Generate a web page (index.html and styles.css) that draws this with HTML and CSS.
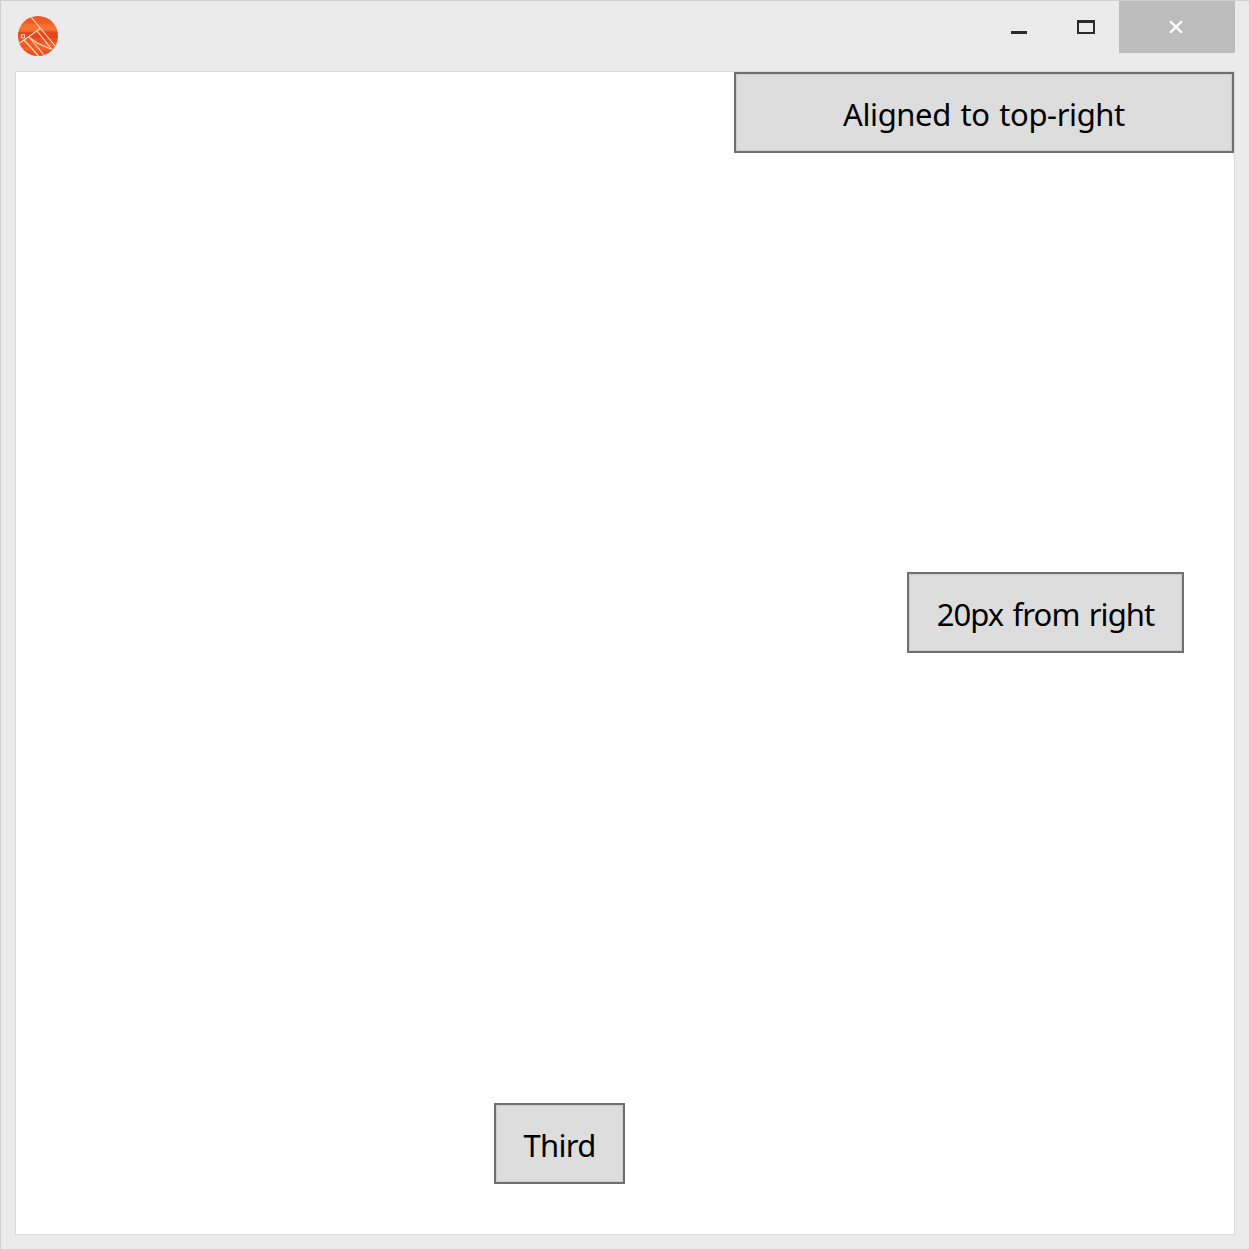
FILE: index.html
```html
<!DOCTYPE html>
<html lang="en">
<head>
<meta charset="utf-8">
<title>Window</title>
<link rel="stylesheet" href="styles.css">
</head>
<body>
<div class="window">
  <header class="titlebar">
    <svg class="logo" width="40" height="40" viewBox="0 0 40 40">
      <defs>
        <clipPath id="disc"><circle cx="20" cy="20" r="20"/></clipPath>
        <linearGradient id="grain" x1="0" y1="0" x2="0" y2="1">
          <stop offset="0" stop-color="#ed5320"/>
          <stop offset=".18" stop-color="#f15f2a"/>
          <stop offset=".28" stop-color="#f57536"/>
          <stop offset=".38" stop-color="#f2682d"/>
          <stop offset=".43" stop-color="#e34a1a"/>
          <stop offset=".52" stop-color="#e54a1a"/>
          <stop offset=".62" stop-color="#ef5c26"/>
          <stop offset=".8" stop-color="#f2622b"/>
          <stop offset="1" stop-color="#e24a1a"/>
        </linearGradient>
      </defs>
      <g clip-path="url(#disc)" fill="none">
        <rect width="40" height="40" fill="url(#grain)"/>
        <path d="M0 17h13l5-1h22M8 21h32M20 25h20M0 30h10l5 2" stroke="#d83a10" stroke-width=".9" opacity=".7"/>
        <path d="M6 9h26M2 13h35M18 29h20" stroke="#ff8540" stroke-width=".8" opacity=".6"/>
        <path d="M13 1 38 31M1 27.5 11 20.5 22 12.5M19 15 34 33.5M6 24 20.5 40M11 21 26 39M11 21 19 27 34 33.5" stroke="#ffd9c6" stroke-width="1.15"/>
        <path d="M3.3 18.8h3.2v3h-3.2z" stroke="#ffd9c6" stroke-width="1.1"/>
      </g>
    </svg>
    <div class="controls">
      <div class="control minimize"><svg width="16" height="3"><path d="M0 0h16v3H0z" fill="#2a2a2a"/></svg></div>
      <div class="control maximize"><svg width="18" height="14"><path fill-rule="evenodd" d="M0 0h18v14H0zM2 3v9h14V3z" fill="#2a2a2a"/></svg></div>
      <div class="control close"><svg width="14" height="12" viewBox="0 0 14 12"><path d="M1 .2 13 11.8M13 .2 1 11.8" stroke="#fff" stroke-width="2.4"/></svg></div>
    </div>
  </header>
  <main class="content">
    <button class="button first"><span class="label">Aligned to top-right</span></button>
    <button class="button second"><span class="label">20px from right</span></button>
    <button class="button third"><span class="label">Third</span></button>
  </main>
</div>
</body>
</html>
```
FILE: styles.css
```css
* { box-sizing: border-box; }
body { margin: 0; }
.window {
  display: flex;
  flex-direction: column;
  width: 1250px;
  height: 1250px;
  padding: 0 14px 14px;
  border: 1px solid #d0d0d0;
  background: #ebebeb;
}
.titlebar {
  display: flex;
  justify-content: space-between;
  align-items: flex-start;
  height: 70px;
  flex: none;
}
.logo { display: block; margin: 15px 0 0 3px; }
.controls { display: flex; }
.control { display: flex; height: 52px; }
.control svg { display: block; }
.minimize { width: 66px; padding: 30px 0 0 16px; }
.maximize { width: 58px; padding: 19px 0 0 16px; }
.close { width: 116px; padding: 20px 0 0 50px; background: #bcbcbc; }
.content {
  display: flex;
  flex-direction: column;
  flex: none;
  width: 1220px;
  height: 1164px;
  border: 1px solid #dadada;
  background: #fff;
}
.button {
  flex: none;
  height: 81px;
  padding: 3px 0 0;
  border: 2px solid #707070;
  border-radius: 0;
  background: #ddd;
  box-shadow: inset 0 0 0 1px #cacaca;
  color: #000;
  font: 400 31px/44px "Noto Sans", "Open Sans", sans-serif;
  word-spacing: 2px;
  white-space: nowrap;
  text-align: center;
}
.first { align-self: flex-end; width: 500px; letter-spacing: -.4px; }
.second { align-self: flex-end; width: 277px; margin: 419px 50px 0 0; letter-spacing: -.9px; }
.third { align-self: flex-start; width: 131px; margin: 450px 0 0 478px; letter-spacing: -.7px; }
```
